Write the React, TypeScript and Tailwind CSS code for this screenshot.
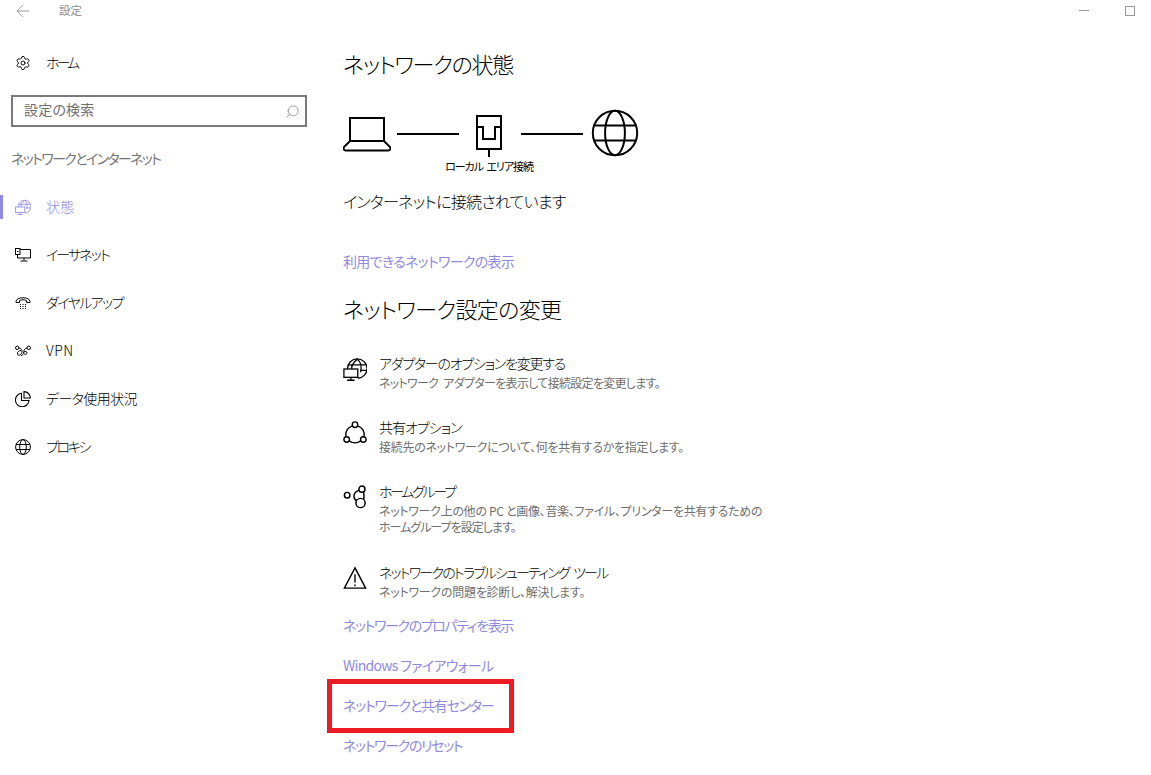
import { ArrowLeft, Search, Settings } from "lucide-react";
import type { ReactNode } from "react";

const FONT = "font-['Noto_Sans_CJK_JP','Noto_Sans',sans-serif] [font-feature-settings:'palt']";

const GlobeMonitorIcon = ({ className = "" }: { className?: string }) => (
  <svg viewBox="0 0 26 26" className={className} fill="none" stroke="currentColor" strokeWidth="1.4">
    <path d="M5 13a10.500 10.500 0 1 1 11 10" />
    <path d="M15.500 2.500c-5 4-5.500 6-5.500 8M15.500 2.500c4 3 5 8 3.500 14M5.500 8.500h20M9.500 13V9M19 14.500h6" />
    <rect x="1" y="13" width="15" height="9" />
    <path d="M8.500 22v3M4.500 25.200h8" />
  </svg>
);

const EthernetIcon = () => (
  <svg viewBox="0 0 16 14" className="h-[14px] w-4" fill="none" stroke="currentColor" strokeWidth="1">
    <path d="M5 1.500h10.500v8.500H2.500V7" />
    <rect x="0.500" y="0.500" width="4.500" height="6" />
    <path d="M2 3.500h1.500M9 10v2.500M5.500 13h7" />
  </svg>
);

const PhoneIcon = () => (
  <svg viewBox="0 0 16 14" className="h-[14px] w-4" fill="none" stroke="currentColor" strokeWidth="1">
    <path d="M1 5.500c0-5 14-5 14 0v1h-3.500V4.500c-2-1-5-1-7 0v2H1z" />
    <path d="M5 8.500h1M7.500 8.500h1M10 8.500h1M5 10.500h1M7.500 10.500h1M10 10.500h1M5 12.500h1M7.500 12.500h1M10 12.500h1" />
  </svg>
);

const VpnIcon = () => (
  <svg viewBox="0 0 16 12" className="h-3 w-4" fill="none" stroke="currentColor" strokeWidth="1">
    <circle cx="2.200" cy="2.800" r="1.700" />
    <circle cx="13.800" cy="2.800" r="1.700" />
    <path d="M3.900 3c2.500 0 3.500 2 3 4.500-.6 2.800-3.900 3.600-4.400 1.500-.5-2 1.500-3.500 3.500-3.500" />
    <path d="M12.100 3c-2.500 0-3 2-3.300 3.800-.4 2.500-1.500 4-2.800 3.800" />
    <path d="M9 7c1.500-1 3-.5 3 .8 0 1.500-2 2.200-3 .9" />
  </svg>
);

const PieIcon = () => (
  <svg viewBox="0 0 16 16" className="h-4 w-4" fill="none" stroke="currentColor" strokeWidth="1.100">
    <path d="M6.500 2.200A6.800 6.800 0 1 0 14 9.500H6.500z" />
    <path d="M9 .6a6.500 6.500 0 0 1 6.400 6.400H9z" />
  </svg>
);

const GlobeIcon = ({ className = "", width = 1 }: { className?: string; width?: number }) => (
  <svg viewBox="0 0 16 16" className={className} fill="none" stroke="currentColor" strokeWidth={width}>
    <circle cx="8" cy="8" r="7.400" />
    <ellipse cx="8" cy="8" rx="3.300" ry="7.400" />
    <path d="M1.200 5.500h13.600M1.200 10.500h13.600" />
  </svg>
);

const LaptopIcon = () => (
  <svg viewBox="0 0 48 36" className="h-9 w-12" fill="none" stroke="currentColor" strokeWidth="2">
    <path d="M7 25V2h34v23" />
    <path d="M7 25h34l6 6c1 1.800 0 3.500-1.500 3.500h-43C1 34.500 0 32.800 1 31z" />
  </svg>
);

const JackIcon = () => (
  <svg viewBox="0 0 26 42" className="h-[42px] w-[26px]" fill="none" stroke="currentColor" strokeWidth="2">
    <rect x="1" y="1" width="24" height="33" />
    <path d="M1 12h6v12h12V12h6M13 34v8" />
  </svg>
);

const ShareIcon = () => (
  <svg viewBox="0 0 26 26" className="h-6 w-6" fill="none" stroke="currentColor" strokeWidth="1.500">
    <circle cx="13" cy="4" r="3" />
    <circle cx="4" cy="20" r="3" />
    <circle cx="22" cy="20" r="3" />
    <path d="M10.200 5.200A10 10 0 0 0 3.200 17M15.800 5.200A10 10 0 0 1 22.800 17M6.800 21.500a10 10 0 0 0 12.400 0" />
  </svg>
);

const HomeGroupIcon = () => (
  <svg viewBox="0 0 26 26" className="h-6 w-6" fill="none" stroke="currentColor" strokeWidth="1.600">
    <circle cx="4.500" cy="11" r="3" />
    <circle cx="20.500" cy="4.500" r="3.300" />
    <circle cx="19" cy="19.500" r="5" />
    <path d="M17.500 5.500c-6 2-7.500 8-3 11.500M22 7.500c1 2 1 4 .5 8" />
  </svg>
);

const WarningIcon = () => (
  <svg viewBox="0 0 26 26" className="h-6 w-6" fill="none" stroke="currentColor" strokeWidth="1.500">
    <path d="M13 2 1.500 24h23z" />
    <path d="M13 9v9M13 20v2" />
  </svg>
);

const NAV_ITEMS: { label: string; icon: ReactNode; text: string; active?: boolean }[] = [
  { label: "状態", icon: <GlobeMonitorIcon className="h-4 w-4" />, text: "tracking-[0.3px]", active: true },
  { label: "イーサネット", icon: <EthernetIcon />, text: "tracking-[-1.9px]" },
  { label: "ダイヤルアップ", icon: <PhoneIcon />, text: "tracking-[-1.6px]" },
  { label: "VPN", icon: <VpnIcon />, text: "tracking-[0.5px]" },
  { label: "データ使用状況", icon: <PieIcon />, text: "tracking-[-0.6px]" },
  { label: "プロキシ", icon: <GlobeIcon className="h-4 w-4" />, text: "tracking-[-2.4px]" },
];

const OPTIONS: { title: string; titleText: string; desc: { line: string; text: string }[]; icon: ReactNode; height: string }[] = [
  {
    title: "アダプターのオプションを変更する",
    titleText: "tracking-[-1.25px]",
    desc: [{ line: "ネットワーク アダプターを表示して接続設定を変更します。", text: "tracking-[-0.7px] [word-spacing:3px]" }],
    icon: <GlobeMonitorIcon className="h-6 w-6" />,
    height: "h-16",
  },
  {
    title: "共有オプション",
    titleText: "tracking-[-1px]",
    desc: [{ line: "接続先のネットワークについて、何を共有するかを指定します。", text: "tracking-[-0.3px]" }],
    icon: <ShareIcon />,
    height: "h-16",
  },
  {
    title: "ホームグループ",
    titleText: "tracking-[-2.300px]",
    desc: [
      { line: "ネットワーク上の他の PC と画像、音楽、ファイル、プリンターを共有するための", text: "tracking-[-0.3px]" },
      { line: "ホームグループを設定します。", text: "tracking-[-1px]" },
    ],
    icon: <HomeGroupIcon />,
    height: "h-[81px]",
  },
  {
    title: "ネットワークのトラブルシューティング ツール",
    titleText: "tracking-[-1.800px] [word-spacing:3px]",
    desc: [{ line: "ネットワークの問題を診断し、解決します。", text: "tracking-[-0.25px]" }],
    icon: <WarningIcon />,
    height: "h-[50px]",
  },
];

const LINKS = [
  { label: "ネットワークのプロパティを表示", text: "tracking-[-1.4px]" },
  { label: "Windows ファイアウォール", text: "tracking-[-0.7px]" },
  { label: "ネットワークと共有センター", text: "tracking-[-1.2px]" },
  { label: "ネットワークのリセット", text: "tracking-[-1.35px]" },
];

export default function App() {
  return (
    <div className={`relative h-[775px] w-[1151px] overflow-hidden bg-white text-black ${FONT}`}>
      {/* Title bar */}
      <div className="flex h-[21px] items-center">
        <ArrowLeft className="ml-[13px] h-5 w-5 text-[#8a8a8a]" strokeWidth={1} />
        <span className="ml-[26px] text-[11.500px] leading-none text-[#8f8f8f]">設定</span>
        <div className="ml-auto mr-4 flex items-center gap-[36px]">
          <div className="h-px w-[10px] bg-[#999999]" />
          <div className="h-[10px] w-[10px] border border-[#999999]" />
        </div>
      </div>

      <div className="flex">
        {/* Sidebar */}
        <aside className="w-[343px] shrink-0">
          <div className="mt-[30px] flex h-6 items-center pl-[15px]">
            <Settings className="h-4 w-4" strokeWidth={1.4} />
            <span className="mb-[2px] ml-[15px] text-[14px] font-light leading-none tracking-[-3px]">ホーム</span>
          </div>
          <div className="ml-[11px] mt-5 flex h-8 w-[296px] items-center justify-between border-2 border-[#7a7a7a] pb-[5px] pl-[11px] pr-[5px]">
            <span className="text-[14px] leading-none tracking-[0.2px] text-[#6f6f6f]">設定の検索</span>
            <Search className="mt-[5px] h-[15px] w-[15px] -scale-x-100 text-[#777777]" strokeWidth={1.1} />
          </div>
          <div className="ml-[11px] mt-[21px] text-[14px] leading-[20px] tracking-[-1.65px] text-[#767676]">ネットワークとインターネット</div>
          <nav className="mt-[15px]">
            {NAV_ITEMS.map((item) => (
              <div key={item.label} className="relative flex h-12 items-center pl-[15px]">
                {item.active && <div className="absolute left-0 top-3 h-6 w-[3px] bg-[#8f8ade]" />}
                <span className={`flex w-4 items-center justify-center ${item.active ? "text-[#8f8ade]" : ""}`}>{item.icon}</span>
                <span className={`mb-[2px] ml-[15px] text-[14px] font-light leading-none ${item.text} ${item.active ? "text-[#8f8ade]" : ""}`}>{item.label}</span>
              </div>
            ))}
          </nav>
        </aside>

        {/* Main column */}
        <main className="min-w-0 flex-1">
          <h1 className="mt-[25px] text-[22px] font-light leading-[34px] tracking-[-1.3px]">ネットワークの状態</h1>
          <div className="mt-[18px] flex h-[77px] items-start">
            <div className="mt-[18px]"><LaptopIcon /></div>
            <div className="ml-[6px] mt-[35px] h-0.5 w-[62px] bg-black" />
            <div className="ml-[17px] mt-[17px] flex w-[26px] flex-col items-center">
              <JackIcon />
              <span className="mt-[2px] whitespace-nowrap text-[11px] leading-[14px] tracking-[-1.05px] [word-spacing:2px]">ローカル エリア接続</span>
            </div>
            <div className="ml-[19px] mt-[35px] h-0.5 w-[62px] bg-black" />
            <GlobeIcon className="ml-2 mt-[11px] h-12 w-12" width={0.66} />
          </div>
          <div className="mt-[14px] text-[16px] font-light leading-[24px] tracking-[-0.75px]">インターネットに接続されています</div>
          <div className="mt-[36px] text-[14px] leading-[24px] tracking-[-0.7px] text-[#8f8ade]">利用できるネットワークの表示</div>
          <h2 className="mt-[18px] text-[22px] font-light leading-[34px] tracking-[-0.65px]">ネットワーク設定の変更</h2>

          <div className="mt-[26px]">
            {OPTIONS.map((option) => (
              <div key={option.title} className={`flex ${option.height}`}>
                <div className="mt-[6px] w-9 shrink-0">{option.icon}</div>
                <div>
                  <div className={`text-[14px] font-light leading-[24px] ${option.titleText}`}>{option.title}</div>
                  {option.desc.map((d) => (
                    <div key={d.line} className={`text-[12px] leading-[16px] text-[#6f6f6f] ${d.text}`}>{d.line}</div>
                  ))}
                </div>
              </div>
            ))}
          </div>

          <div className="mt-[3px] flex flex-col gap-4 text-[14px] leading-[24px] text-[#8f8ade]">
            {LINKS.map((link) => (
              <span key={link.label} className={link.text}>{link.label}</span>
            ))}
          </div>
        </main>
      </div>

      {/* Red annotation box */}
      <div className="absolute left-[327px] top-[679px] h-[54px] w-[187px] border-[5px] border-[#ed1c24]" />
    </div>
  );
}
